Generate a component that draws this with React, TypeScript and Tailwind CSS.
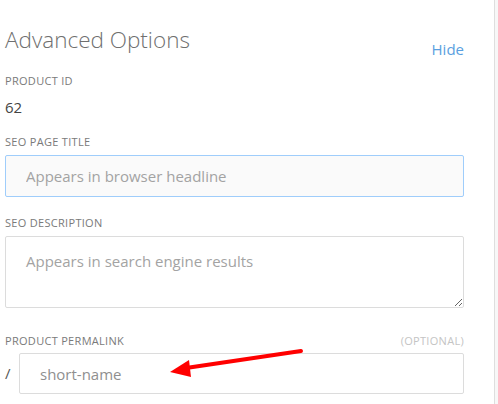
import React from "react";

const font = { fontFamily: '"Open Sans", "Liberation Sans", sans-serif' };

function Label({ children, right }: { children: React.ReactNode; right?: React.ReactNode }) {
  return (
    <div className="flex items-center justify-between text-[11px] leading-[14px] tracking-[0.3px] text-[#7a7a7a] uppercase">
      <span>{children}</span>
      {right}
    </div>
  );
}

export default function App() {
  return (
    <div className="relative w-[498px] h-[404px] bg-[#f7f7f7] overflow-hidden" style={font}>
      <div className="w-[495px] h-full bg-white border-r border-[#dedede] pl-[5px] pr-[30px] pt-[26px]">
        <div className="flex items-end justify-between">
          <h2 className="text-[22.5px] leading-[28px] font-light text-[#6f6f6f]">Advanced Options</h2>
          <a className="text-[15px] leading-[20px] text-[#5a9fe0] mb-[-5px]">Hide</a>
        </div>
        <div className="mt-[20px]">
          <Label>Product ID</Label>
          <div className="mt-[9px] text-[15px] leading-[20px] text-[#444]">62</div>
        </div>
        <div className="mt-[18px]">
          <Label>SEO Page Title</Label>
          <input
            className="mt-[6px] block w-full h-[42px] rounded-[2px] border border-[#9fcdfb] bg-[#fafafa] px-[20px] text-[15px] outline-none placeholder:text-[#a3a3a3]"
            placeholder="Appears in browser headline"
          />
        </div>
        <div className="mt-[19px]">
          <Label>SEO Description</Label>
          <textarea
            className="mt-[6px] block w-full h-[72px] rounded-[2px] border border-[#dcdcdc] bg-white px-[20px] py-[14px] text-[15px] leading-[20px] outline-none placeholder:text-[#a3a3a3]"
            placeholder="Appears in search engine results"
          />
        </div>
        <div className="mt-[26px]">
          <Label right={<span className="text-[#c4c4c4]">(Optional)</span>}>Product Permalink</Label>
          <div className="mt-[5px] flex items-center">
            <span className="w-[14px] text-[15px] text-[#555]">/</span>
            <input
              className="block flex-1 h-[41px] rounded-[2px] border border-[#dcdcdc] bg-white px-[20px] text-[15px] text-[#444] outline-none placeholder:text-[#8f8f8f]"
              placeholder="short-name"
            />
          </div>
        </div>
      </div>
      <svg className="absolute left-0 top-0 pointer-events-none" width="498" height="404">
        <line x1="301" y1="351" x2="186" y2="368" stroke="#ff0000" strokeWidth="4" strokeLinecap="round" />
        <polygon points="170,372 189,360 191,377" fill="#ff0000" />
      </svg>
    </div>
  );
}
